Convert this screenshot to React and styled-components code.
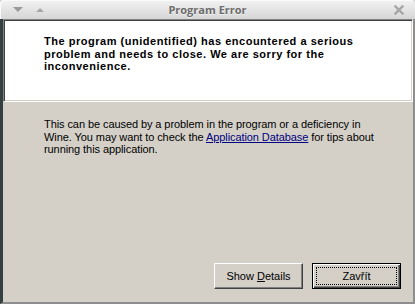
import React from 'react';
import styled, { createGlobalStyle } from 'styled-components';

const Global = createGlobalStyle`
  html, body { margin: 0; padding: 0; background: #d4d0c8; }
  body { width: 415px; height: 304px; overflow: hidden; }
`;

const Window = styled.div`
  width: 415px;
  height: 304px;
  display: flex;
  flex-direction: column;
  box-sizing: border-box;
  background: #d4d0c8;
  font-family: "Liberation Sans", Arial, sans-serif;
`;

const TitleBar = styled.div`
  height: 19px;
  flex: none;
  display: grid;
  grid-template-columns: 1fr auto 1fr;
  align-items: center;
  background: linear-gradient(#f2f2f2, #d6d6d6);
  border-top-left-radius: 4px;
  border-top-right-radius: 4px;
  box-shadow: inset 1px 1px 0 #fafafa;
`;

const TitleButtons = styled.div`
  display: flex;
  align-items: center;
  gap: 12px;
  padding-left: ${p => p.$left ? '13px' : '0'};
  padding-right: ${p => p.$right ? '11px' : '0'};
  justify-content: ${p => p.$right ? 'flex-end' : 'flex-start'};
`;

const Title = styled.div`
  font-family: "Open Sans", "Liberation Sans", sans-serif;
  font-weight: 700;
  font-size: 11px;
  color: #6c6c6c;
  line-height: 19px;
  text-shadow: 0 1px 0 rgba(255,255,255,0.6);
`;

const Frame = styled.div`
  flex: 1;
  display: flex;
  flex-direction: column;
  border-left: 3px solid #34403f;
  border-right: 2px solid #8e8e8e;
  border-bottom: 2px solid #8e8e8e;
  min-height: 0;
`;

const Banner = styled.div`
  height: 83px;
  box-sizing: border-box;
  flex: none;
  background: #ffffff;
  border-top: 1px solid #808080;
  border-left: 1px solid #808080;
  border-right: 1px solid #ffffff;
  border-bottom: 1px solid #ffffff;
  box-shadow: inset 1px 1px 0 #404040, inset -1px -1px 0 #d4d0c8;
  padding: 15px 10px 0 40px;
`;

const Headline = styled.p`
  margin: 0;
  width: 352px;
  font-weight: 700;
  font-size: 11px;
  letter-spacing: 0.52px;
  line-height: 12.7px;
  color: #000;
`;

const Body = styled.p`
  margin: 16px 0 0 41px;
  width: 338px;
  font-size: 11px;
  letter-spacing: -0.08px;
  line-height: 12.7px;
  color: #000;
`;

const Link = styled.a`
  color: #000080;
  text-decoration: underline;
`;

const Spacer = styled.div`
  flex: 1;
`;

const ButtonRow = styled.div`
  display: flex;
  justify-content: flex-end;
  gap: 9px;
  padding: 0 12px 13px 0;
`;

const Button = styled.button`
  position: relative;
  width: 89px;
  height: 26px;
  box-sizing: border-box;
  padding: 0;
  background: #d4d0c8;
  font-family: "Liberation Sans", Arial, sans-serif;
  font-size: 11px;
  color: #000;
  border: 1px solid;
  border-color: ${p => p.$default ? '#000 #000 #000 #000' : '#ffffff #404040 #404040 #ffffff'};
  box-shadow: ${p => p.$default
    ? 'inset 1px 1px 0 #ffffff, inset -1px -1px 0 #404040, inset -2px -2px 0 #808080'
    : 'inset -1px -1px 0 #808080'};
  &::after {
    content: '';
    display: ${p => p.$default ? 'block' : 'none'};
    position: absolute;
    inset: 3px;
    border: 1px dotted #000;
  }
`;

const Key = styled.span`
  text-decoration: underline;
`;

function DownIcon() {
  return (
    <svg width="10" height="6" viewBox="0 0 10 6">
      <polygon points="0,0 10,0 5,5" fill="#9a9a9a" />
    </svg>
  );
}

function UpIcon() {
  return (
    <svg width="10" height="6" viewBox="0 0 10 6">
      <polygon points="1,5 9,5 5,1" fill="#a8a8a8" />
    </svg>
  );
}

function CloseIcon() {
  return (
    <svg width="10" height="10" viewBox="0 0 10 10">
      <path d="M1.5 1.5 L8.5 8.5 M8.5 1.5 L1.5 8.5" stroke="#a6a6a6" strokeWidth="2.4" strokeLinecap="square" />
    </svg>
  );
}

export default function App() {
  return (
    <>
      <Global />
      <Window>
        <TitleBar>
          <TitleButtons $left>
            <DownIcon />
            <UpIcon />
          </TitleButtons>
          <Title>Program Error</Title>
          <TitleButtons $right>
            <CloseIcon />
          </TitleButtons>
        </TitleBar>
        <Frame>
          <Banner>
            <Headline>
              The program (unidentified) has encountered a serious problem and needs to close. We are sorry for the inconvenience.
            </Headline>
          </Banner>
          <Body>
            This can be caused by a problem in the program or a deficiency in Wine. You may want to check the{' '}
            <Link href="#">Application Database</Link> for tips about running this application.
          </Body>
          <Spacer />
          <ButtonRow>
            <Button>Show <Key>D</Key>etails</Button>
            <Button $default>Zavřít</Button>
          </ButtonRow>
        </Frame>
      </Window>
    </>
  );
}
